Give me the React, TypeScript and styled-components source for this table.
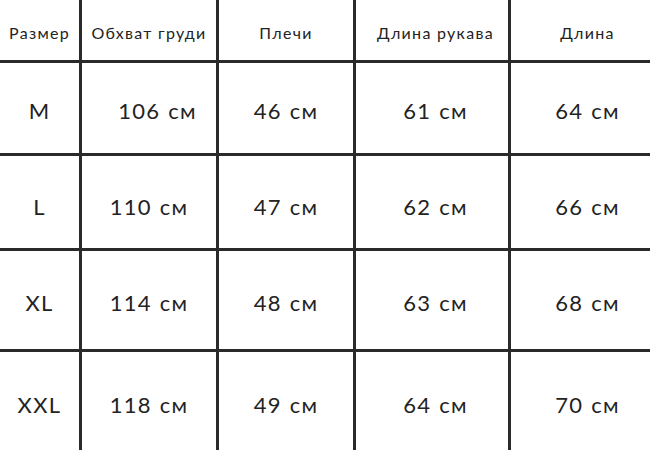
import React from "react";
import styled, {createGlobalStyle} from "styled-components";

const GlobalStyle = createGlobalStyle`
  html, body {
    margin: 0;
    padding: 0;
    background: #ffffff;
  }
`;

const headers = ["Размер", "Обхват груди", "Плечи", "Длина рукава", "Длина"];

const rows = [
    {size: "M", values: ["106 см", "46 см", "61 см", "64 см"], drop: 4, chestShift: 17},
    {size: "L", values: ["110 см", "47 см", "62 см", "66 см"], drop: 9, chestShift: 0},
    {size: "XL", values: ["114 см", "48 см", "63 см", "68 см"], drop: 4, chestShift: 0},
    {size: "XXL", values: ["118 см", "49 см", "64 см", "70 см"], drop: 7, chestShift: 0},
];

// horizontal nudges per column (the source image centers some columns off-cell)
const colShift = [0, 0, 0, 7, 14];

export default function App() {
    return (
        <>
            <GlobalStyle/>
            <SizeTable>
                {headers.map((h, i) =>
                    <HeadCell key={h} $shift={colShift[i]}>{h}</HeadCell>
                )}
                {rows.map((row) => (
                    <React.Fragment key={row.size}>
                        <Cell $drop={row.drop} $shift={0}>{row.size}</Cell>
                        {row.values.map((v, i) =>
                            <Cell key={i} $drop={row.drop}
                                  $shift={i === 0 ? row.chestShift : colShift[i + 1]}>{v}</Cell>
                        )}
                    </React.Fragment>
                ))}
            </SizeTable>
        </>
    );
}

const SizeTable = styled.div`
  display: grid;
  grid-template-columns: 79px 134px 134px 152px 1fr;
  grid-template-rows: 60px 90px 92px 98px 98px;
  gap: 3px;
  width: 650px;
  height: 450px;
  background-color: #2a2a2a;
  font-family: Lato, "Noto Sans", sans-serif;
  color: #232323;
`

const HeadCell = styled.div<{ $shift: number }>`
  background: #ffffff;
  display: flex;
  align-items: center;
  justify-content: center;
  padding-top: 4px;
  padding-left: ${p => p.$shift}px;
  font-size: 16px;
  letter-spacing: 1.3px;
  white-space: nowrap;
`

const Cell = styled.div<{ $drop: number; $shift: number }>`
  background: #ffffff;
  display: flex;
  align-items: center;
  justify-content: center;
  padding-top: ${p => p.$drop}px;
  padding-left: ${p => p.$shift}px;
  font-size: 22px;
  letter-spacing: 1.3px;
  word-spacing: 1px;
  white-space: nowrap;
`
